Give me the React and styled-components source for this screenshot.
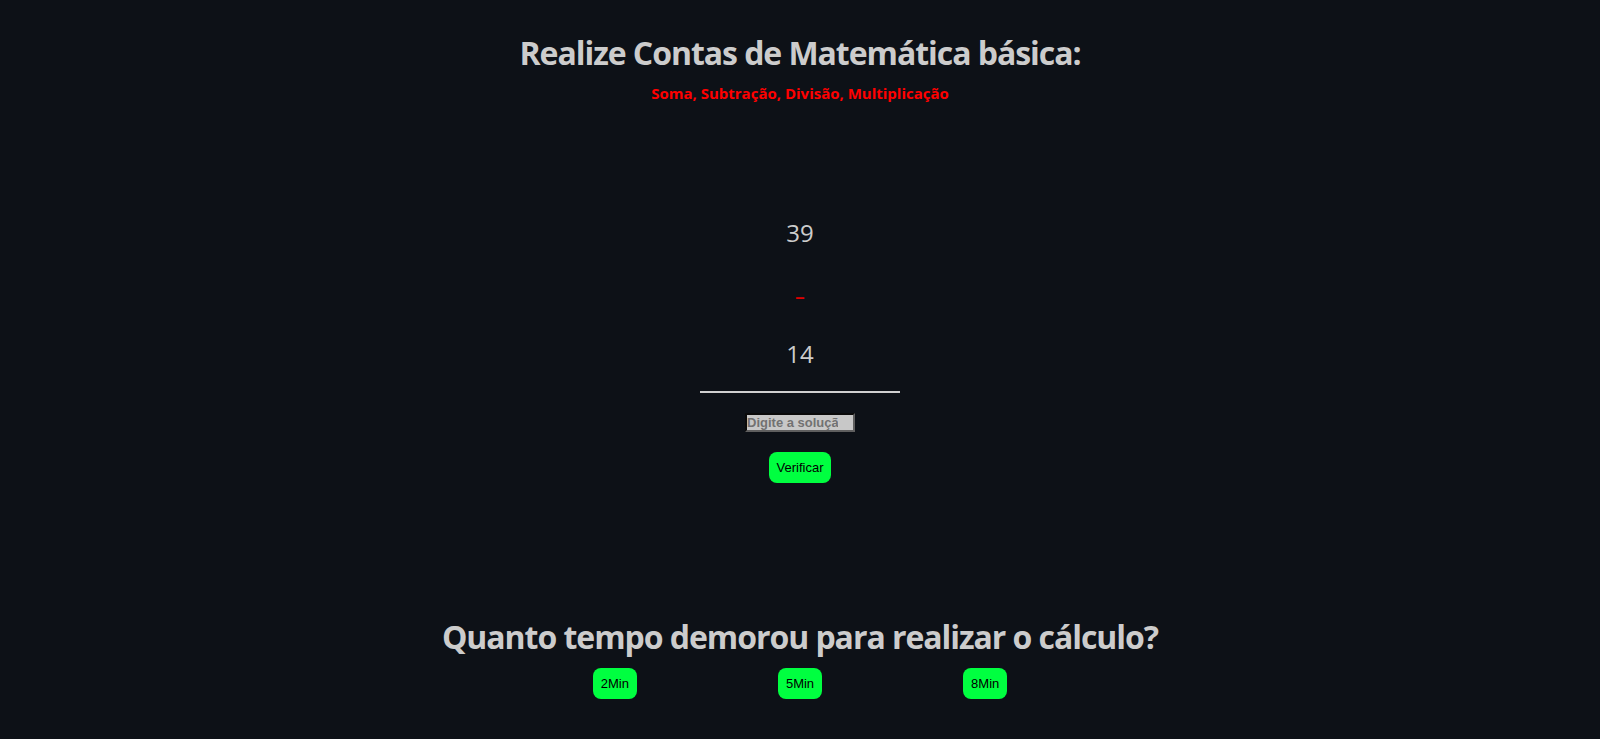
import React from "react";
import styled, { createGlobalStyle } from "styled-components";

const GlobalStyle = createGlobalStyle`
  html, body {
    margin: 0;
    padding: 0;
    background: #0d1117;
  }
  body {
    font-family: "Open Sans", "Noto Sans", sans-serif;
    color: #cccccc;
  }
`;

const Page = styled.main`
  min-height: 739px;
  display: flex;
  flex-direction: column;
  align-items: center;
  padding-top: 33px;
  box-sizing: border-box;
`;

const Title = styled.h1`
  margin: 0;
  font-size: 32px;
  line-height: 40px;
  font-weight: 700;
  letter-spacing: -1.05px;
  color: #cccccc;
  text-align: center;
`;

const Subtitle = styled.h4`
  margin: 10px 0 0;
  font-size: 15px;
  line-height: 20px;
  font-weight: 700;
  color: #ff0000;
`;

const Operation = styled.section`
  margin-top: 114px;
  display: flex;
  flex-direction: column;
  align-items: center;
`;

const Operand = styled.p`
  margin: 0;
  font-size: 24px;
  line-height: 32px;
  color: #cccccc;
`;

const Operator = styled.p`
  margin: 28.5px 0;
  font-size: 24px;
  line-height: 32px;
  color: #e00000;
  transform: translateY(2px) scaleX(1.4);
`;

const Rule = styled.hr`
  margin: 21px 0 0;
  width: 200px;
  height: 2px;
  border: none;
  background: #d0d0d0;
`;

const AnswerInput = styled.input`
  margin-top: 20px;
  width: 110px;
  height: 19px;
  box-sizing: border-box;
  padding: 0;
  background: #c8c8c8;
  border: 2px inset #5f5f5f;
  font-family: "Liberation Sans", Arial, sans-serif;
  font-size: 13px;
  font-weight: 700;
  color: #333;
  &::placeholder {
    color: #727272;
  }
`;

const GreenButton = styled.button`
  margin-top: ${(p) => p.$top || 0}px;
  padding: 8px;
  border: none;
  border-radius: 8px;
  background: #00ff40;
  color: #000;
  font-family: "Liberation Sans", Arial, sans-serif;
  font-size: 13px;
  line-height: 15px;
  cursor: pointer;
`;

const TimeTitle = styled.h2`
  margin: 132px 0 0;
  font-size: 32px;
  line-height: 44px;
  font-weight: 700;
  letter-spacing: -1.05px;
  color: #cccccc;
`;

const TimeRow = styled.div`
  margin-top: 9px;
  display: flex;
  gap: 141px;
`;

export default function App() {
  const [answer, setAnswer] = React.useState("");
  return (
    <>
      <GlobalStyle />
      <Page>
        <Title>Realize Contas de Matemática básica:</Title>
        <Subtitle>Soma, Subtração, Divisão, Multiplicação</Subtitle>
        <Operation>
          <Operand>39</Operand>
          <Operator>-</Operator>
          <Operand>14</Operand>
          <Rule />
          <AnswerInput
            type="number"
            value={answer}
            onChange={(e) => setAnswer(e.target.value)}
            placeholder="Digite a solução"
          />
          <GreenButton $top={20}>Verificar</GreenButton>
        </Operation>
        <TimeTitle>Quanto tempo demorou para realizar o cálculo?</TimeTitle>
        <TimeRow>
          <GreenButton>2Min</GreenButton>
          <GreenButton>5Min</GreenButton>
          <GreenButton>8Min</GreenButton>
        </TimeRow>
      </Page>
    </>
  );
}
